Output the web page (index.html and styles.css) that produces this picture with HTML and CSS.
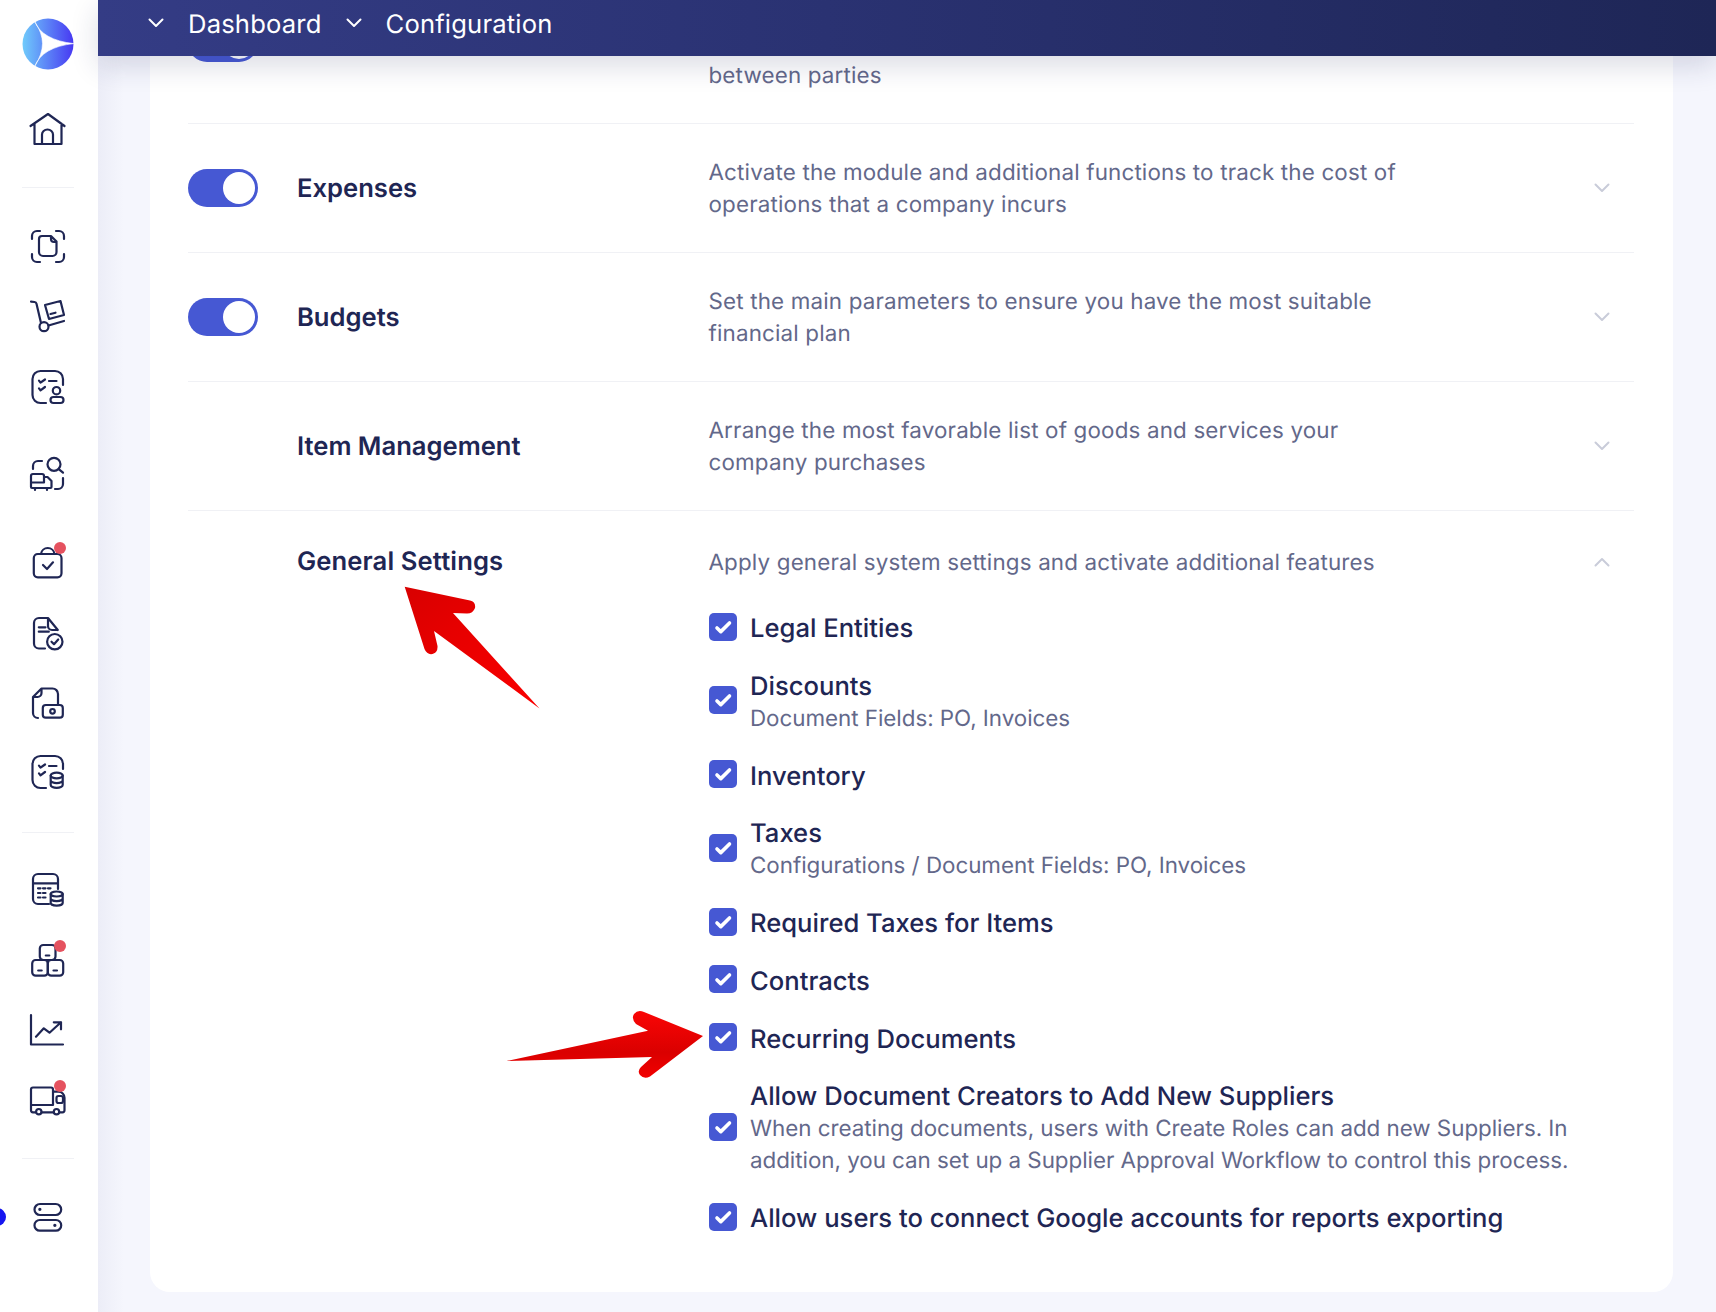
FILE: index.html
```html
<!DOCTYPE html>
<html lang="en">
<head>
<meta charset="utf-8">
<title>Configuration</title>
<link rel="stylesheet" href="styles.css">
</head>
<body>
<svg class="sprite" aria-hidden="true">
  <symbol id="chev" viewBox="0 0 20 20"><path d="M3.5 6.5 10 13l6.5-6.5" fill="none" stroke="currentColor" stroke-width="2" stroke-linecap="round" stroke-linejoin="round"/></symbol>
  <symbol id="tick" viewBox="0 0 28 28"><path d="M8 15 11.800 18.600 20.500 10" fill="none" stroke="#fff" stroke-width="3.600" stroke-linecap="round" stroke-linejoin="round"/></symbol>
</svg>

<aside class="sidebar">
  <svg class="logo" viewBox="0 0 52 52">
    <defs><linearGradient id="lg" x1="0" x2="1" y1="0" y2="0"><stop offset="0" stop-color="#70cbfb"/><stop offset="1" stop-color="#4738f2"/></linearGradient></defs>
    <circle cx="26" cy="26" r="25.5" fill="url(#lg)"/>
    <path d="M12.5 3.2Q20 22 51.8 25.6Q20 29 12.5 48.8Q20.5 36 20.5 25.6Q20.5 15 12.5 3.2Z" fill="#fff" stroke="#fff" stroke-width=".6"/>
  </svg>
  <svg class="icon nav-home" viewBox="0 0 40 40"><path d="M2.5 16 20 4l16.5 12M6.5 13.5V34h27V13.5M14 34V24.5a5.5 5 0 0 1 11 0V34"/></svg>
  <div class="rule rule-1"></div>
  <svg class="icon nav-38" viewBox="0 0 40 40"><path d="M4 13v-3a5 5 0 0 1 5-5h3M28 5h3a5 5 0 0 1 5 5v3M36 28v3a5 5 0 0 1-5 5h-3M12 36H9a5 5 0 0 1-5-5v-3M14 10h9l5.5 5.5V26a4 4 0 0 1-4 4H15a4 4 0 0 1-4-4V13a3 3 0 0 1 3-3zM23 10v3a3 3 0 0 0 3 3h2.5"/></svg>
  <svg class="icon nav-29" viewBox="0 0 40 40"><path d="M3 6.7 6.5 7q1.6.2 2 1.800L13 28M17 10l15.500-4L36 20l-15 4zM22.500 19l5-1.300M20.500 30.500 36 26"/><circle cx="16" cy="31.700" r="4.500"/></svg>
  <svg class="icon nav-32" viewBox="0 0 40 40"><path d="M35 18v-6a8 8 0 0 0-8-8H12.500a8 8 0 0 0-8 8v16a8 8 0 0 0 8 8H18M11 13.700l1.500 2 4.500-3.200M21 14h7.500M11 21.300l1.500 2 4.500-3.300"/><circle cx="28.500" cy="23.700" r="3.700"/><rect x="22.500" y="30" width="13" height="6" rx="3"/></svg>
  <svg class="icon nav-48" viewBox="0 0 40 40"><circle cx="26" cy="9.300" r="6.500"/><path d="M31 14.300l4 3.400M5 14v-3a5 5 0 0 1 5-5h4M35 23v6a5 5 0 0 1-5 5h-3M3 27.500V21a2 2 0 0 1 2-2h9a2 2 0 0 1 2 2v6.500H3zM16 22h3.500l4 4v6a1 1 0 0 1-1 1H4a1 1 0 0 1-1-1v-5M7 33v2M19 33v2"/></svg>
  <div class="nav-badge nav-47">
    <svg class="icon" viewBox="0 0 40 40"><rect x="5.800" y="12" width="27.700" height="23.300" rx="4"/><path d="M13 12a6.800 6.800 0 0 1 13.500 0M15 23l4 4 6-6.700"/></svg>
    <span class="dot"></span>
  </div>
  <svg class="icon nav-31" viewBox="0 0 40 40"><path d="M29.800 17 20 5h-9a5 5 0 0 0-5 5v20.500a5 5 0 0 0 5 5h6M20 5v8a4 4 0 0 0 4 4h5.800M10.800 14.300h6.700M10.800 18.700h10"/><circle cx="26.800" cy="28.700" r="7.700"/><path d="M23.500 28.700l2.500 2.500 4.200-4.700"/></svg>
  <svg class="icon nav-31" viewBox="0 0 40 40"><path d="M30 20V10a5.500 5.500 0 0 0-5.500-5.500h-11L5 13v16a5 5 0 0 0 5 5M13.500 4.500V9a4 4 0 0 1-4 4H5"/><rect x="14.800" y="21" width="20" height="12.700" rx="3"/><circle cx="24.500" cy="27.300" r="2.300"/></svg>
  <svg class="icon nav-28" viewBox="0 0 40 40"><path d="M35 17v-5a8 8 0 0 0-8-8H12.500a8 8 0 0 0-8 8v16a8 8 0 0 0 8 8H18M11 13.700l1.500 2 4.500-3.200M21 14h7.500M11 21.300l1.500 2 4.500-3.300"/><ellipse cx="28.700" cy="23.500" rx="6" ry="2.800"/><path d="M22.700 23.500v9.500c0 1.500 2.700 2.800 6 2.800s6-1.300 6-2.800v-9.500M22.700 28.300c0 1.500 2.700 2.800 6 2.800s6-1.300 6-2.800"/></svg>
  <div class="rule rule-2"></div>
  <svg class="icon nav-36" viewBox="0 0 40 40"><path d="M30 20V10a5 5 0 0 0-5-5H10a5 5 0 0 0-5 5v20a5 5 0 0 0 5 5h11M5 14.300h25M10 19.300h2.500M15 19.300h2.500M20 19.300h2.500M10 24h2.500M15 24h2.500M10 28.500h2.500M15 28.500h2.500"/><ellipse cx="28.700" cy="25" rx="6" ry="2.500"/><path d="M22.700 25v9c0 1.400 2.700 2.600 6 2.600s6-1.200 6-2.600v-9M22.700 29.500c0 1.400 2.700 2.600 6 2.600s6-1.200 6-2.600"/></svg>
  <div class="nav-badge nav-31">
    <svg class="icon" viewBox="0 0 40 40"><rect x="11.800" y="5" width="15.700" height="15" rx="3.500"/><rect x="4.200" y="20" width="15.600" height="15.700" rx="3.500"/><rect x="19.800" y="20" width="15.400" height="15.700" rx="3.500"/><path d="M17.800 15.500h3.500M10.200 30.500h3.500M25.500 30.500h3.500"/></svg>
    <span class="dot"></span>
  </div>
  <svg class="icon nav-30" viewBox="0 0 40 40"><path d="M3 5v29.500h32M8 26.700l7.800-8.400 5.700 4.400L33 12.300M25.800 12.300H33v7"/></svg>
  <div class="nav-badge nav-30">
    <svg class="icon" viewBox="0 0 40 40"><path d="M25 25V9.500a2 2 0 0 0-2-2H5a2 2 0 0 0-2 2V25zM25 11.700h5.500a6 6 0 0 1 6 6V30.300a2 2 0 0 1-2 2h-3.200M8 32.300H5a2 2 0 0 1-2-2V25M13.500 32.300h12.300"/><rect x="28.500" y="16" width="6.500" height="7" rx="2"/><circle cx="10.800" cy="31.700" r="2.700"/><circle cx="28.500" cy="31.700" r="2.700"/></svg>
    <span class="dot"></span>
  </div>
  <div class="rule rule-3"></div>
  <svg class="icon nav-38" viewBox="0 0 40 40"><rect x="6.500" y="7" width="26.700" height="11" rx="5.500"/><rect x="6.500" y="23" width="26.700" height="10.700" rx="5.300"/><path class="dots" d="M11.800 12.300h.1M26.800 28.300h.1"/></svg>
  <span class="pointer"></span>
</aside>

<main class="main">
  <header class="topbar">
    <svg class="crumb-chev"><use href="#chev"/></svg><span class="crumb">Dashboard</span>
    <svg class="crumb-chev"><use href="#chev"/></svg><span class="crumb">Configuration</span>
  </header>
  <div class="content">
    <section class="card">
      <div class="row row-tall">
        <span class="toggle"></span>
        <h3 class="row-title"></h3>
        <p class="row-desc"><br><br>between parties</p>
        <span></span>
      </div>
      <div class="row">
        <span class="toggle"></span>
        <h3 class="row-title">Expenses</h3>
        <p class="row-desc">Activate the module and additional functions to track the cost of operations that a company incurs</p>
        <svg class="row-chev"><use href="#chev"/></svg>
      </div>
      <div class="row">
        <span class="toggle"></span>
        <h3 class="row-title">Budgets</h3>
        <p class="row-desc">Set the main parameters to ensure you have the most suitable financial plan</p>
        <svg class="row-chev"><use href="#chev"/></svg>
      </div>
      <div class="row">
        <span></span>
        <h3 class="row-title">Item Management</h3>
        <p class="row-desc">Arrange the most favorable list of goods and services your company purchases</p>
        <svg class="row-chev"><use href="#chev"/></svg>
      </div>
      <div class="row row-open">
        <span></span>
        <h3 class="row-title">General Settings</h3>
        <div class="open-body">
          <p class="row-desc">Apply general system settings and activate additional features</p>
          <ul class="options">
            <li class="option"><svg class="check"><use href="#tick"/></svg><div class="opt-text"><div class="opt-label">Legal Entities</div></div></li>
            <li class="option"><svg class="check"><use href="#tick"/></svg><div class="opt-text"><div class="opt-label">Discounts</div><div class="opt-sub">Document Fields: PO, Invoices</div></div></li>
            <li class="option"><svg class="check"><use href="#tick"/></svg><div class="opt-text"><div class="opt-label">Inventory</div></div></li>
            <li class="option"><svg class="check"><use href="#tick"/></svg><div class="opt-text"><div class="opt-label">Taxes</div><div class="opt-sub">Configurations / Document Fields: PO, Invoices</div></div></li>
            <li class="option"><svg class="check"><use href="#tick"/></svg><div class="opt-text"><div class="opt-label">Required Taxes for Items</div></div></li>
            <li class="option"><svg class="check"><use href="#tick"/></svg><div class="opt-text"><div class="opt-label">Contracts</div></div></li>
            <li class="option"><svg class="check"><use href="#tick"/></svg><div class="opt-text"><div class="opt-label">Recurring Documents</div></div></li>
            <li class="option"><svg class="check"><use href="#tick"/></svg><div class="opt-text"><div class="opt-label">Allow Document Creators to Add New Suppliers</div><div class="opt-sub">When creating documents, users with Create Roles can add new Suppliers. In addition, you can set up a Supplier Approval Workflow to control this process.</div></div></li>
            <li class="option"><svg class="check"><use href="#tick"/></svg><div class="opt-text"><div class="opt-label">Allow users to connect Google accounts for reports exporting</div></div></li>
          </ul>
        </div>
        <svg class="row-chev row-chev-up"><use href="#chev"/></svg>
      </div>
    </section>
  </div>
</main>

<svg class="annotations" viewBox="0 0 1716 1312" aria-hidden="true">
  <defs>
    <linearGradient id="a1" x1="0" y1="0" x2="1" y2="1"><stop offset="0" stop-color="#d80000"/><stop offset=".35" stop-color="#e60000"/><stop offset="1" stop-color="#fa0000"/></linearGradient>
    <linearGradient id="a2" x1="0" y1="0" x2="0" y2="1"><stop offset="0" stop-color="#fa0505"/><stop offset=".62" stop-color="#da0000"/><stop offset="1" stop-color="#f20000"/></linearGradient>
  </defs>
  <path fill="url(#a1)" d="M404.700 586.700 470 600.500Q476 602 475 608Q473 613.500 467 613.500L453 613 539.500 708.500 434 631 437.500 646Q438 652.500 432.500 654Q427 655 424.500 649Z"/>
  <path fill="url(#a2)" d="M506.500 1061 648 1030.700 636 1024Q631 1018.500 634 1014Q638 1009 644 1012L703 1036 650 1076.500Q644 1079.500 640 1075Q637 1071 641 1067L652 1057Z"/>
</svg>
</body>
</html>
```

FILE: styles.css
```css
* { box-sizing: border-box; }
html, body { margin: 0; height: 1312px; }
body {
  position: relative;
  display: flex;
  width: 1716px;
  overflow: hidden;
  font-family: Inter, "Liberation Sans", sans-serif;
  text-rendering: geometricPrecision;
  color: #1f2654;
  background: #f5f6fd;
}
.sprite { display: none; }

/* sidebar */
.sidebar {
  position: relative;
  flex: none;
  width: 98px;
  display: flex;
  flex-direction: column;
  align-items: center;
  padding: 18px 3px 0 0;
  background: #fff;
  overflow: hidden;
}
.logo { width: 52px; height: 52px; flex: none; }
.icon {
  display: block;
  flex: none;
  width: 40px;
  height: 40px;
  fill: none;
  stroke: #1f2654;
  stroke-width: 2.2;
  stroke-linecap: round;
  stroke-linejoin: round;
}
.icon .dots { stroke-width: 3.2; }
.nav-home { margin-top: 40px; }
.nav-28 { margin-top: 28px; }
.nav-29 { margin-top: 29px; }
.nav-30 { margin-top: 30px; }
.nav-31 { margin-top: 31px; }
.nav-32 { margin-top: 32px; }
.nav-36 { margin-top: 36px; }
.nav-38 { margin-top: 38px; }
.nav-47 { margin-top: 47px; }
.nav-48 { margin-top: 48px; }
.rule { flex: none; width: 52px; height: 1px; background: #f0f1f5; }
.rule-1 { margin-top: 37px; }
.rule-2 { margin-top: 40px; }
.rule-3 { margin-top: 38px; }
.nav-badge { position: relative; flex: none; width: 40px; height: 40px; }
.dot {
  position: absolute;
  left: 26.500px;
  top: -0.500px;
  width: 12px;
  height: 12px;
  border-radius: 50%;
  background: #e5525f;
}
.pointer {
  position: absolute;
  left: -12px;
  top: 1208px;
  width: 18px;
  height: 18px;
  border-radius: 50%;
  background: #1616f0;
}

/* main */
.main {
  flex: 1;
  min-width: 0;
  display: flex;
  flex-direction: column;
  background: linear-gradient(90deg, #ecedf7 0, #f5f6fd 26px);
}
.topbar {
  position: relative;
  z-index: 2;
  flex: none;
  height: 56px;
  display: flex;
  align-items: flex-start;
  padding: 9px 0 0 48px;
  color: #fff;
  font-size: 25.600px;
  line-height: 32px;
  letter-spacing: .17px;
  background: linear-gradient(90deg, #343c85 0, #2a3272 45%, #1e2656 100%);
  box-shadow: 0 10px 28px rgba(30, 38, 90, .16);
}
.crumb-chev { flex: none; width: 20px; height: 20px; margin-top: 4px; color: #fff; }
.crumb { margin: 0 22px 0 22px; }
.content {
  flex: 1;
  min-height: 0;
  overflow: hidden;
  display: flex;
  flex-direction: column;
  justify-content: flex-end;
  padding: 0 43px 20px 52px;
}
.card {
  flex: none;
  padding: 0 39px 59px 38px;
  background: #fff;
  border-radius: 0 0 20px 20px;
}
.row {
  display: grid;
  grid-template-columns: 109px 411px 1fr 56px;
  align-items: center;
  height: 129px;
  border-bottom: 1px solid #f0f1f5;
}
.row-tall { height: 161px; }
.row-open { height: auto; align-items: start; padding-top: 35px; border-bottom: 0; }
.toggle {
  position: relative;
  display: block;
  width: 70px;
  height: 38px;
  border-radius: 19px;
  background: #4658d3;
}
.toggle::after {
  content: "";
  position: absolute;
  right: 3px;
  top: 3px;
  width: 32px;
  height: 32px;
  border-radius: 50%;
  background: #fff;
}
.row-title { margin: 0; padding-top: 1px; margin-bottom: -1px; font-size: 25.600px; line-height: 32px; font-weight: 600; color: #1f2654; }
.row-open .row-title { padding-top: 0; margin-bottom: 0; letter-spacing: .12px; }
.row-desc { margin: 0 0 -1px; padding: 1px 0 0 .5px; max-width: 710px; font-size: 22.400px; line-height: 32px; letter-spacing: .16px; color: #63688a; }
.row-chev { width: 20px; height: 20px; justify-self: end; margin-right: 22px; color: #c9ccd9; }
.row-open .row-chev { margin-top: 6px; }
.row-chev-up { transform: scaleY(-1); }
.open-body { min-width: 0; }
.options { list-style: none; margin: 33px 0 0; padding: 0; display: flex; flex-direction: column; gap: 25.750px; }
.option { display: flex; align-items: center; gap: 13px; }
.check { flex: none; width: 28px; height: 28px; margin: 0 0 1px 1px; border-radius: 5px; background: #4658d3; }
.opt-text { padding-top: 2px; margin-bottom: -2px; }
.opt-label { font-size: 25.600px; line-height: 32px; font-weight: 450; letter-spacing: .01px; color: #1f2654; }
.opt-sub { font-size: 22.400px; line-height: 32px; letter-spacing: -.04px; color: #63688a; }

/* annotations */
.annotations { position: absolute; left: 0; top: 0; width: 1716px; height: 1312px; z-index: 5; pointer-events: none; }
```
